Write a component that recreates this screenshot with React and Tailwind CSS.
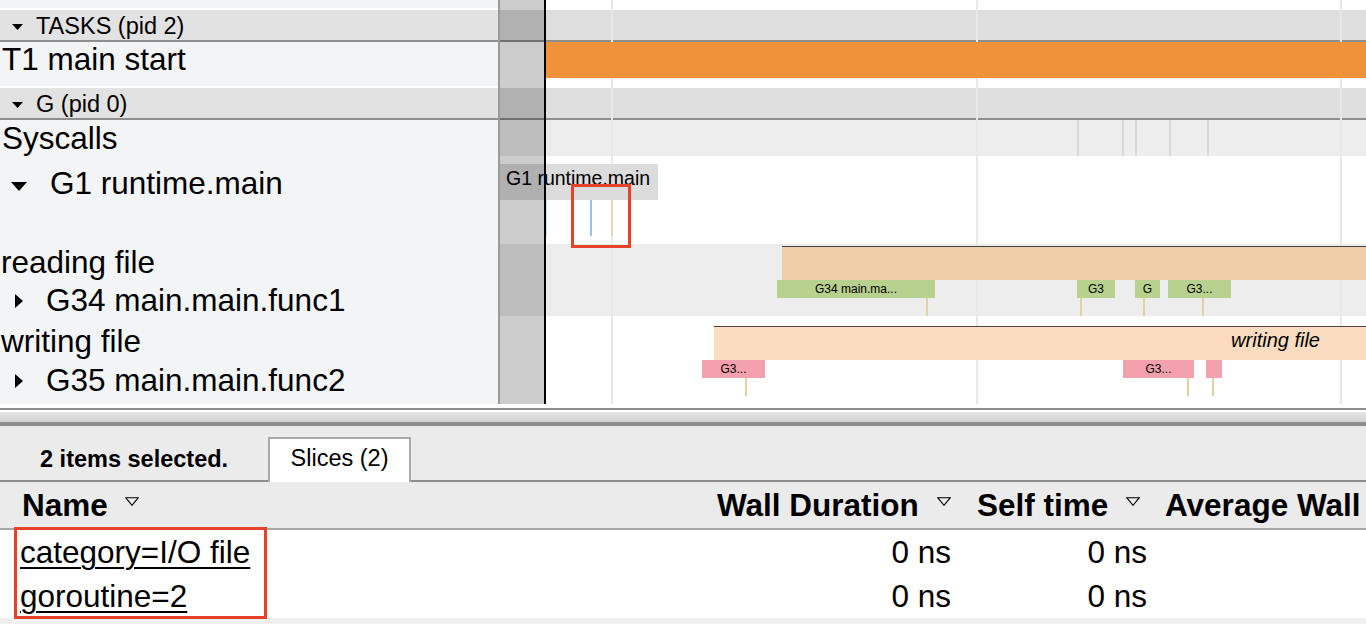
import React from "react";

const font = "font-['Liberation_Sans',Arial,Helvetica,sans-serif]";

function TriDown({ w = 11, h = 6, className = "" }) {
  return (
    <svg width={w} height={h} viewBox={`0 0 ${w} ${h}`} className={`shrink-0 ${className}`}>
      <polygon points={`0,0 ${w},0 ${w / 2},${h}`} fill="#000" />
    </svg>
  );
}

function TriRight({ className = "" }) {
  return (
    <svg width="8" height="14" viewBox="0 0 8 14" className={`shrink-0 ${className}`}>
      <polygon points="0,0 8,7 0,14" fill="#000" />
    </svg>
  );
}

function SortArrow({ className = "" }) {
  return (
    <svg width="14" height="9" viewBox="0 0 14 9" className={`shrink-0 ${className}`}>
      <polygon points="0.7,0.7 13.3,0.7 7,8.3" fill="none" stroke="#000" strokeWidth="1.1" />
    </svg>
  );
}

function Slice({ left, width, color, label }) {
  return (
    <div
      className={`absolute top-0 h-[18px] overflow-hidden whitespace-nowrap text-center text-[12px] leading-[18px] text-black ${color}`}
      style={{ left, width }}
    >
      {label}
    </div>
  );
}

function Tick({ left, top, color = "bg-[#e3d1a3]" }) {
  return <div className={`absolute h-[18px] w-[1.5px] ${color}`} style={{ left, top }} />;
}

function LabelColumn() {
  return (
    <div className="flex w-[500px] shrink-0 flex-col border-r-2 border-[#9a9a9a] text-black">
      <div className="h-[8px] bg-[#f3f4f6]" />
      <div className="h-[2px] bg-white" />
      <div className="flex h-[32px] items-start border-b-2 border-[#8e8e8e] bg-[#e2e2e2] text-[23.5px]">
        <TriDown className="ml-[12px] mt-[14px]" />
        <span className="ml-[13px] pt-[1px] leading-[30px]">TASKS (pid 2)</span>
      </div>
      <div className="h-[44px] bg-[#f3f4f6] pl-[2px] text-[31.5px] leading-[34px]">T1 main start</div>
      <div className="h-[2px] bg-white" />
      <div className="flex h-[32px] items-start border-b-2 border-[#8e8e8e] bg-[#e2e2e2] text-[23.5px]">
        <TriDown className="ml-[12px] mt-[14px]" />
        <span className="ml-[13px] pt-[1px] leading-[30px]">G (pid 0)</span>
      </div>
      <div className="flex flex-1 flex-col bg-[#f3f4f6] text-[31.5px] leading-[36px]">
        <div className="h-[36px] pl-[2px]">Syscalls</div>
        <div className="mt-[9px] flex h-[36px] items-start">
          <TriDown w={16} h={9} className="ml-[11px] mt-[17px]" />
          <span className="ml-[23px]">G1 runtime.main</span>
        </div>
        <div className="mt-[43px] h-[36px] pl-[1px]">reading file</div>
        <div className="mt-[2px] flex h-[36px] items-start">
          <TriRight className="ml-[15px] mt-[12px]" />
          <span className="ml-[23px]">G34 main.main.func1</span>
        </div>
        <div className="mt-[5px] h-[36px] pl-[1px]">writing file</div>
        <div className="mt-[3px] flex h-[36px] items-start">
          <TriRight className="ml-[15px] mt-[12px]" />
          <span className="ml-[23px]">G35 main.main.func2</span>
        </div>
      </div>
    </div>
  );
}

function Canvas() {
  const grid = [111, 476, 840];
  const sys = [577, 622, 635, 669, 707];
  return (
    <div className="relative flex-1 overflow-hidden">
      <div className="h-[10px] bg-white" />
      <div className="h-[32px] border-b-2 border-[#8e8e8e] bg-[#dedede]" />
      <div className="h-[46px] bg-white">
        <div className="relative z-[2] ml-[45px] h-[36px] bg-[#f0923a]" />
      </div>
      <div className="h-[32px] border-b-2 border-[#8e8e8e] bg-[#dedede]" />
      <div className="relative h-[36px] bg-[#ededed]">
        {sys.map((x) => (
          <div key={x} className="absolute top-0 z-[2] h-full w-[1.5px] bg-[#d9d9d9]" style={{ left: x }} />
        ))}
      </div>
      <div className="relative h-[88px] bg-white">
        <div className="absolute left-0 top-[8px] z-[2] h-[36px] w-[158px] bg-[#dcdcdc] pl-[6px] text-[19.5px] leading-[28px] whitespace-nowrap">
          G1 runtime.main
        </div>
        <div className="absolute left-[46px] top-[44px] z-[2] h-[36px] w-[1px] bg-[#bfe3e3]" />
        <div className="absolute left-[90px] top-[44px] z-[2] h-[36px] w-[1.5px] bg-[#9cc2f2]" />
        <div className="absolute left-[111px] top-[44px] z-[2] h-[36px] w-[1.5px] bg-[#e6d7b5]" />
      </div>
      <div className="relative h-[72px] bg-[#ededed]">
        <div className="absolute left-[282px] right-0 top-[2px] z-[2] h-[34px] border-t border-[#444] bg-[#eecfa9]" />
        <div className="absolute inset-x-0 top-[36px] z-[2]">
          <Slice left={277} width={158} color="bg-[#b8d18f]" label="G34 main.ma..." />
          <Slice left={577} width={38} color="bg-[#b8d18f]" label="G3" />
          <Slice left={635} width={25} color="bg-[#b8d18f]" label="G" />
          <Slice left={668} width={63} color="bg-[#b8d18f]" label="G3..." />
          <Tick left={426} top={18} />
          <Tick left={580} top={18} />
          <Tick left={643} top={18} />
          <Tick left={702} top={18} />
        </div>
      </div>
      <div className="relative h-[88px] bg-white">
        <div className="absolute left-[214px] right-0 top-[10px] z-[2] h-[34px] border-t border-[#444] bg-[#fbdcc1]">
          <span className="absolute right-[46px] top-0 text-[20px] italic leading-[26px] text-black">writing file</span>
        </div>
        <div className="absolute inset-x-0 top-[44px] z-[2]">
          <Slice left={202} width={63} color="bg-[#f2a1ad]" label="G3..." />
          <Slice left={623} width={71} color="bg-[#f2a1ad]" label="G3..." />
          <Slice left={706} width={16} color="bg-[#f2a1ad]" label="" />
          <Tick left={245} top={18} />
          <Tick left={687} top={18} />
          <Tick left={712} top={18} />
        </div>
      </div>

      {grid.map((x) => (
        <div key={x} className="absolute inset-y-0 z-[1] w-[2px] bg-[#e8e8e8]" style={{ left: x }} />
      ))}
      <div className="absolute inset-y-0 left-0 z-[3] w-[44px] bg-black/20" />
      <div className="absolute inset-y-0 left-[44px] z-[3] w-[2px] bg-black" />
      <div className="absolute left-[71px] top-[184px] z-[5] h-[64px] w-[60px] border-[3px] border-[#e8412a]" />
    </div>
  );
}

function Details() {
  return (
    <div className="flex flex-1 flex-col bg-[#ebebeb] text-black">
      <div className="flex h-[56px] items-end border-b-2 border-[#8e8e8e]">
        <div className="w-[268px] self-center pl-[40px] pt-[14px] text-[23.5px] font-bold">2 items selected.</div>
        <div className="-mb-[2px] flex h-[45px] w-[143px] items-center justify-center border-2 border-b-0 border-[#a8a8a8] bg-white pb-[3px] text-[23.5px]">
          Slices (2)
        </div>
      </div>
      <div className="relative">
        <div className="grid h-[48px] grid-cols-[705px_258px_192px_1fr] border-b-2 border-[#a8a8a8] text-[31.5px] font-bold leading-[46px] whitespace-nowrap">
          <div className="flex items-center pl-[22px]">
            Name
            <SortArrow className="ml-[17px] -mt-[8px]" />
          </div>
          <div className="flex items-center pl-[12px]">
            Wall Duration
            <SortArrow className="ml-[18px] -mt-[8px]" />
          </div>
          <div className="flex items-center pl-[14px]">
            Self time
            <SortArrow className="ml-[18px] -mt-[8px]" />
          </div>
          <div className="overflow-hidden pl-[10px]">Average Wall</div>
        </div>
        <div className="bg-white text-[31.5px] leading-[44px]">
          {["category=I/O file", "goroutine=2"].map((name) => (
            <div key={name} className="grid h-[44px] grid-cols-[705px_258px_192px_1fr]">
              <div className="pl-[20px] underline decoration-[2px] underline-offset-[4px]">{name}</div>
              <div className="pr-[12px] text-right">0 ns</div>
              <div className="pr-[8px] text-right">0 ns</div>
              <div />
            </div>
          ))}
        </div>
        <div className="absolute left-[14px] top-[45px] h-[92px] w-[253px] border-[3px] border-[#e8412a]" />
      </div>
      <div className="flex-1 bg-[#efefef]" />
    </div>
  );
}

export default function App() {
  return (
    <div className={`flex h-[624px] w-[1366px] flex-col overflow-hidden bg-white ${font}`}>
      <div className="flex h-[404px] shrink-0">
        <LabelColumn />
        <Canvas />
      </div>
      <div className="h-[4px] shrink-0 bg-white" />
      <div className="h-[2px] shrink-0 bg-[#8e8e8e]" />
      <div className="h-[2px] shrink-0 bg-white" />
      <div className="h-[10px] shrink-0 bg-linear-to-b from-[#e6e6e6] to-[#d0d0d0]" />
      <div className="h-[4px] shrink-0 bg-[#8e8e8e]" />
      <Details />
    </div>
  );
}
